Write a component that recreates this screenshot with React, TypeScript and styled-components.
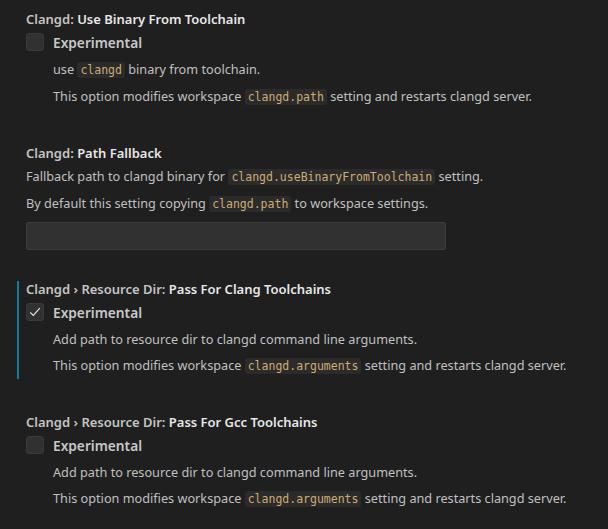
import styled, { createGlobalStyle } from "styled-components";

const GlobalStyle = createGlobalStyle`
  html, body {
    margin: 0;
    padding: 0;
    background: #1f1f1f;
  }
  body {
    font-family: "Noto Sans", "Open Sans", sans-serif;
    font-size: 13px;
    color: #cccccc;
  }
`;

const SettingsList = styled.div`
  padding: 11px 0 0 17px;
  width: 591px;
  height: 518px;
  overflow: hidden;
`;

const SettingItem = styled.div<{ $modified?: boolean; $after?: number }>`
  border-left: 2px solid ${(p) => (p.$modified ? "#0c7d9d" : "transparent")};
  padding: 0 0 4px 7px;
  margin-bottom: ${(p) => p.$after ?? 35}px;
`;

const Title = styled.div`
  font-weight: 600;
  line-height: 16px;
  margin-bottom: 6px;
  white-space: nowrap;
`;

const Category = styled.span`
  color: #c4c4c4;
`;

const Label = styled.span`
  color: #e7e7e7;
`;

const CheckRow = styled.div`
  display: flex;
  align-items: center;
  gap: 9px;
  height: 18px;
`;

const Box = styled.div`
  width: 18px;
  height: 18px;
  box-sizing: border-box;
  border-radius: 3px;
  background: #313131;
  border: 1px solid #3a3a3a;
  display: flex;
  align-items: center;
  justify-content: center;
`;

const BoxLabel = styled.span`
  font-weight: 600;
  font-size: 13.7px;
  color: #c8c8c8;
`;

const Description = styled.div<{ $indent?: boolean; $top: number }>`
  display: flex;
  flex-direction: column;
  gap: 8px;
  margin-top: ${(p) => p.$top}px;
  padding-left: ${(p) => (p.$indent ? 27 : 0)}px;
  font-size: 12.7px;
  color: #c0c0c0;
`;

const Line = styled.div`
  line-height: 18px;
  white-space: nowrap;
`;

const Code = styled.code`
  font-family: "DejaVu Sans Mono", "Liberation Mono", monospace;
  font-size: 11.5px;
  color: #cfab6f;
  background: #2b2b2b;
  border-radius: 3px;
  padding: 1px 3px;
`;

const TextInput = styled.div`
  margin-top: 9px;
  width: 420px;
  height: 28px;
  box-sizing: border-box;
  background: #313131;
  border: 1px solid #3a3a3a;
  border-radius: 2px;
`;

const Check = () => (
  <svg width="14" height="14" viewBox="0 0 16 16" fill="none">
    <path d="M2.5 8.5 L6 12 L13.5 3.5" stroke="#e8e8e8" strokeWidth="1.3" />
  </svg>
);

const Checkbox = ({ checked }: { checked?: boolean }) => (
  <CheckRow>
    <Box>{checked && <Check />}</Box>
    <BoxLabel>Experimental</BoxLabel>
  </CheckRow>
);

export default function App() {
  return (
    <>
      <GlobalStyle />
      <SettingsList>
        <SettingItem>
          <Title>
            <Category>Clangd: </Category>
            <Label>Use Binary From Toolchain</Label>
          </Title>
          <Checkbox />
          <Description $indent $top={9}>
            <Line>
              use <Code>clangd</Code> binary from toolchain.
            </Line>
            <Line>
              This option modifies workspace <Code>clangd.path</Code> setting and restarts clangd server.
            </Line>
          </Description>
        </SettingItem>

        <SettingItem $after={27}>
          <Title>
            <Category>Clangd: </Category>
            <Label>Path Fallback</Label>
          </Title>
          <Description $top={2}>
            <Line>
              Fallback path to clangd binary for <Code>clangd.useBinaryFromToolchain</Code> setting.
            </Line>
            <Line>
              By default this setting copying <Code>clangd.path</Code> to workspace settings.
            </Line>
          </Description>
          <TextInput />
        </SettingItem>

        <SettingItem $modified>
          <Title>
            <Category>Clangd › Resource Dir: </Category>
            <Label>Pass For Clang Toolchains</Label>
          </Title>
          <Checkbox checked />
          <Description $indent $top={9}>
            <Line>Add path to resource dir to clangd command line arguments.</Line>
            <Line>
              This option modifies workspace <Code>clangd.arguments</Code> setting and restarts clangd server.
            </Line>
          </Description>
        </SettingItem>

        <SettingItem>
          <Title>
            <Category>Clangd › Resource Dir: </Category>
            <Label>Pass For Gcc Toolchains</Label>
          </Title>
          <Checkbox />
          <Description $indent $top={9}>
            <Line>Add path to resource dir to clangd command line arguments.</Line>
            <Line>
              This option modifies workspace <Code>clangd.arguments</Code> setting and restarts clangd server.
            </Line>
          </Description>
        </SettingItem>
      </SettingsList>
    </>
  );
}
